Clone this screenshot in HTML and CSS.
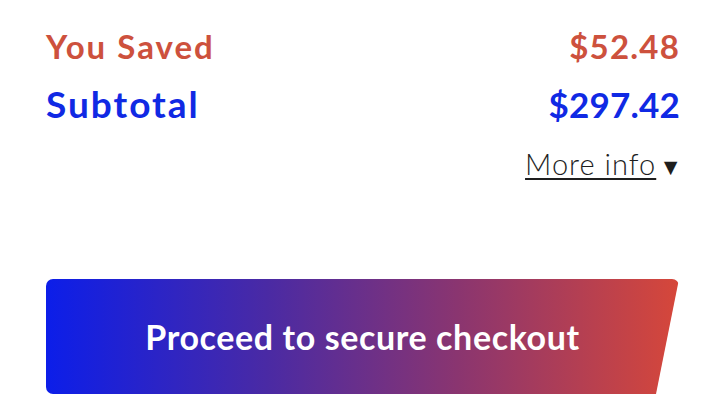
FILE: index.html
```html
<!DOCTYPE html>
<html lang="en">
<head>
  <meta charset="UTF-8" />
  <meta name="viewport" content="width=device-width, initial-scale=1.0" />
  <title>Cart summary</title>
  <link rel="stylesheet" href="styles.css">
</head>
<body>
  <div class="summary">
    <div class="row saved">
      <span class="label">You Saved</span>
      <span class="amount">$52.48</span>
    </div>
    <div class="row subtotal">
      <span class="label">Subtotal</span>
      <span class="amount">$297.42</span>
    </div>
    <div class="more">
      <a href="#" class="more-link">More info</a>
      <span class="caret">&#9660;</span>
    </div>
    <button class="checkout-btn">Proceed to secure checkout</button>
  </div>
</body>
</html>
```

FILE: styles.css
```css
body {
  margin: 0;
  background: #fff;
  font-family: Lato, "Open Sans", sans-serif;
}
.summary {
  padding: 24px 36px 0 46px;
  display: flex;
  flex-direction: column;
}
.row {
  display: flex;
  justify-content: space-between;
  align-items: baseline;
  font-weight: 700;
}
.row .label {
  letter-spacing: 2px;
}
.saved {
  color: #cd513d;
  font-size: 33px;
  line-height: 44px;
}
.saved .amount {
  letter-spacing: 1.2px;
}
.subtotal {
  color: #1029e4;
  font-size: 37px;
  line-height: 48px;
  margin-top: 12px;
}
.subtotal .label {
  letter-spacing: 2px;
}
.subtotal .amount {
  font-size: 35px;
  letter-spacing: 0.2px;
}
.more {
  display: flex;
  justify-content: flex-end;
  align-items: baseline;
  gap: 3px;
  margin-top: 16px;
  font-size: 29px;
  line-height: 40px;
  color: #1e1e1e;
}
.more-link {
  color: #1e1e1e;
  font-weight: 300;
  letter-spacing: 1px;
  text-decoration: underline;
  text-decoration-thickness: 2px;
  text-underline-offset: 3px;
}
.caret {
  font-size: 23px;
  margin-right: -2px;
}
.checkout-btn {
  margin-top: 93px;
  width: 633px;
  height: 115px;
  border: none;
  border-radius: 7px;
  padding: 0;
  background: linear-gradient(90deg, #0c1ee9 0%, #4a2aa4 35%, #8a3570 65%, #d6473a 100%);
  clip-path: polygon(0 0, 100% 0, calc(100% - 23px) 100%, 0 100%);
  color: #fff;
  font-family: Lato, "Open Sans", sans-serif;
  font-size: 34px;
  font-weight: 700;
  letter-spacing: 0.6px;
  cursor: pointer;
}
```
